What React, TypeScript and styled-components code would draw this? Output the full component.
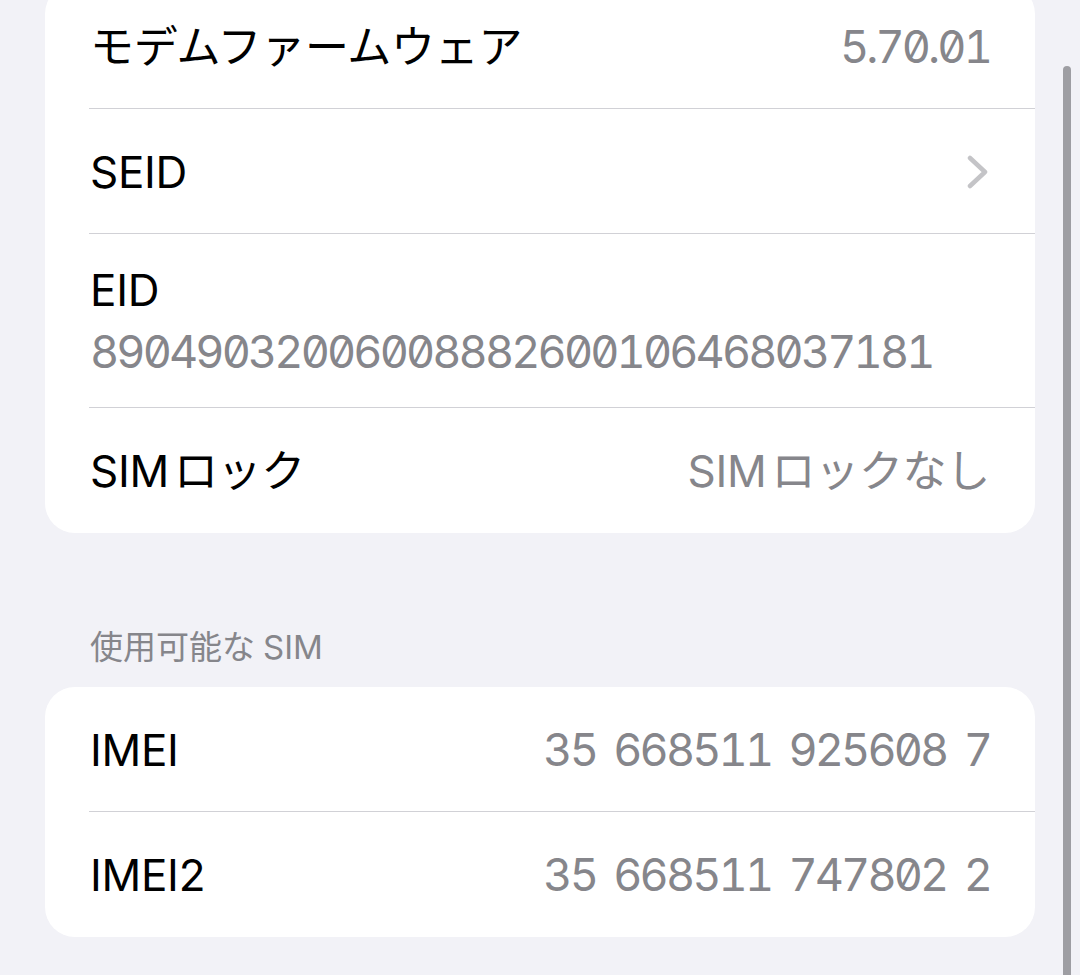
import React from "react";
import styled, { createGlobalStyle } from "styled-components";

const GlobalStyle = createGlobalStyle`
  html, body {
    margin: 0;
    padding: 0;
    background: #f2f2f7;
  }
  body {
    font-family: Inter, "Noto Sans CJK JP", sans-serif;
    -webkit-font-smoothing: antialiased;
  }
`;

const Screen = styled.div`
  position: relative;
  width: 1080px;
  height: 975px;
  overflow: hidden;
  background: #f2f2f7;
`;

// the list is scrolled a little, so the first card's top is out of view
const Content = styled.div`
  margin-top: -16px;
  padding: 0 45px;
  display: flex;
  flex-direction: column;
`;

const Card = styled.div`
  background: #ffffff;
  border-radius: 30px;
  overflow: hidden;
`;

const Row = styled.div<{ $last?: boolean }>`
  display: flex;
  align-items: center;
  justify-content: space-between;
  height: 125px;
  padding: 0 45px;
  position: relative;
  box-sizing: border-box;

  &::after {
    content: "";
    display: ${(p) => (p.$last ? "none" : "block")};
    position: absolute;
    left: 44px;
    right: 0;
    bottom: 0;
    height: 1.5px;
    background: #d1d1d6;
  }
`;

const StackRow = styled(Row)`
  height: 174px;
  flex-direction: column;
  align-items: flex-start;
  justify-content: flex-start;
  padding-top: 30px;
  gap: 10px;
`;

const Label = styled.span`
  font-size: 44px;
  line-height: 52px;
  color: #000000;
  letter-spacing: -0.3px;
`;

const Value = styled.span<{ $num?: boolean }>`
  font-size: ${(p) => (p.$num ? "45px" : "44px")};
  line-height: 52px;
  color: #86868b;
  letter-spacing: ${(p) => (p.$num ? "-2.85px" : "-0.3px")};
  word-spacing: ${(p) => (p.$num ? "8px" : "normal")};
  font-feature-settings: ${(p) => (p.$num ? `"tnum" 1, "zero" 1` : "normal")};
  white-space: nowrap;
`;

// the small space iOS puts between Latin and Japanese runs
const Gap = styled.span<{ $w?: number }>`
  display: inline-block;
  width: ${(p) => p.$w ?? 5}px;
`;

const Chevron = styled.svg`
  width: 24px;
  height: 34px;
`;

const SectionHeader = styled.div`
  margin: 94px 0 20px;
  padding-left: 45px;
  font-size: 33px;
  line-height: 40px;
  color: #86868b;
`;

const ScrollBar = styled.div`
  position: absolute;
  left: 1063px;
  top: 66px;
  width: 8px;
  height: 940px;
  border-radius: 4px;
  background: #9e9ea3;
`;

interface IInfoRow {
  label: React.ReactNode;
  value: React.ReactNode;
  num?: boolean;
  last?: boolean;
}

const InfoRow = ({ label, value, num, last }: IInfoRow) => (
  <Row $last={last}>
    <Label>{label}</Label>
    <Value $num={num}>{value}</Value>
  </Row>
);

export default function App() {
  return (
    <>
      <GlobalStyle />
      <Screen>
        <Content>
          <Card>
            <InfoRow label="モデムファームウェア" value="5.70.01" num />
            <Row>
              <Label>SEID</Label>
              <Chevron viewBox="0 0 24 34">
                <path
                  d="M4 3 L19 17 L4 31"
                  fill="none"
                  stroke="#c4c4c7"
                  strokeWidth="4.5"
                  strokeLinecap="round"
                  strokeLinejoin="round"
                />
              </Chevron>
            </Row>
            <StackRow>
              <Label>EID</Label>
              <Value $num>89049032006008882600106468037181</Value>
            </StackRow>
            <InfoRow
              label={<>SIM<Gap />ロック</>}
              value={<>SIM<Gap />ロックなし</>}
              last
            />
          </Card>

          <SectionHeader>使用可能な<Gap $w={8} />SIM</SectionHeader>

          <Card>
            <InfoRow label="IMEI" value="35 668511 925608 7" num />
            <InfoRow label="IMEI2" value="35 668511 747802 2" num last />
          </Card>
        </Content>
        <ScrollBar />
      </Screen>
    </>
  );
}
